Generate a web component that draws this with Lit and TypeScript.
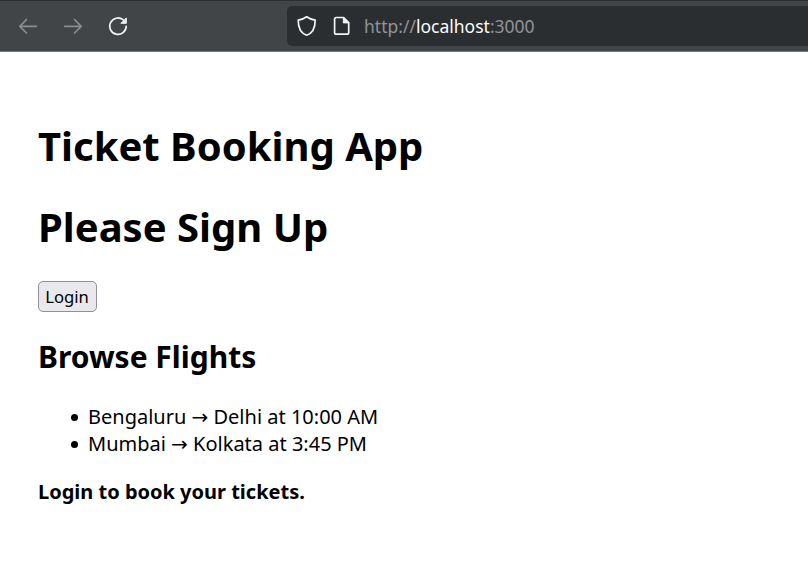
import { LitElement, html, css } from "lit";
import { customElement } from "lit/decorators.js";

const flights = [
  { from: "Bengaluru", to: "Delhi", time: "10:00 AM" },
  { from: "Mumbai", to: "Kolkata", time: "3:45 PM" },
];

@customElement("browser-toolbar")
class BrowserToolbar extends LitElement {
  static styles = css`
    :host { display: flex; height: 52px; box-sizing: border-box; background: #424548; border-top: 1px solid #2b2e31; border-bottom: 1px solid #77797b; align-items: center; padding-left: 18px; font-family: "Noto Sans", sans-serif; }
    .nav { display: flex; gap: 25px; width: 269px; }
    svg { display: block; fill: none; stroke-width: 1.7; stroke-linecap: round; stroke-linejoin: round; flex: none; }
    .dim { stroke: #8b8d8f; }
    .lit { stroke: #f4f4f5; }
    .solid { fill: #f4f4f5; }
    .url { flex: 1; height: 40px; background: #2a2e31; border-radius: 5px 0 0 5px; display: flex; align-items: center; padding-left: 10px; color: #929496; font-size: 17.5px; }
    .shield { margin-right: 15px; }
    .page { margin-right: 12px; }
    b { font-weight: 400; color: #fcfcfc; }
  `;
  render() {
    return html`
      <div class="nav">
        <svg class="dim" width="20" height="20" viewBox="0 0 20 20"><path d="M18.300 10.300H2M8.500 3.500L1.800 10.300L8.500 17" /></svg>
        <svg class="dim" width="20" height="20" viewBox="0 0 20 20"><path d="M1.700 10.300H18M11.500 3.500L18.200 10.300L11.500 17" /></svg>
        <svg class="lit" width="20" height="20" viewBox="0 0 20 20"><path d="M18.200 10.300A8.200 8.200 0 1 1 15 3.700" /><path class="solid" stroke-width="1" d="M18.300 2.300V7.300H13.300Z" /></svg>
      </div>
      <div class="url">
        <svg class="lit shield" width="20" height="22" viewBox="0 0 20 22"><path d="M9.700 1.800Q13.500 4.500 18.200 5.200C18.200 12 16 18 9.700 20.200C3.400 18 1.200 12 1.200 5.200Q5.900 4.500 9.700 1.800Z" /></svg>
        <svg class="lit page" width="20" height="22" viewBox="0 0 20 22"><path d="M4.300 2.500H11.500L16.700 7.700V17.500Q16.700 19.200 15 19.200H4.300Q2.600 19.200 2.600 17.500V4.200Q2.600 2.500 4.300 2.500Z" /><path class="solid" stroke-width="1" d="M11.300 2.500V7.900H16.700Z" /></svg>
        <span>http://<b>localhost</b>:3000</span>
      </div>`;
  }
}

@customElement("app-root")
class AppRoot extends LitElement {
  static styles = css`
    :host { display: block; height: 583px; overflow: hidden; background: #fff; color: #000; font: 20px/27px "Noto Sans", sans-serif; }
    main { display: flex; flex-direction: column; align-items: flex-start; padding: 67px 38px 0; }
    h1, h2, p, ul { margin: 0; }
    h1 { font-size: 40px; line-height: 54px; margin-bottom: 27px; }
    button { height: 31px; width: 59px; padding: 0 1px 0 0; margin-bottom: 24px; font: 16.67px "Noto Sans", sans-serif; color: #000; background: #e9e9ed; border: 1px solid #8f8f9d; border-radius: 5px; }
    h2 { font-size: 30px; line-height: 41px; margin-bottom: 26px; }
    ul { padding-left: 33px; margin-bottom: 21px; list-style: none; }
    li { display: flex; align-items: center; }
    li::before { content: ""; width: 7px; height: 7px; margin: 2px 10px 0 0; border-radius: 50%; background: #000; }
    .arrow { font-family: "DejaVu Sans", sans-serif; line-height: 0; }
    p { font-weight: 700; }
  `;
  render() {
    return html`
      <browser-toolbar></browser-toolbar>
      <main>
        <h1>Ticket Booking App</h1>
        <h1>Please Sign Up</h1>
        <button>Login</button>
        <h2>Browse Flights</h2>
        <ul>${flights.map((f) => html`<li><span>${f.from} <span class="arrow">→</span> ${f.to} at ${f.time}</span></li>`)}</ul>
        <p>Login to book your tickets.</p>
      </main>`;
  }
}
